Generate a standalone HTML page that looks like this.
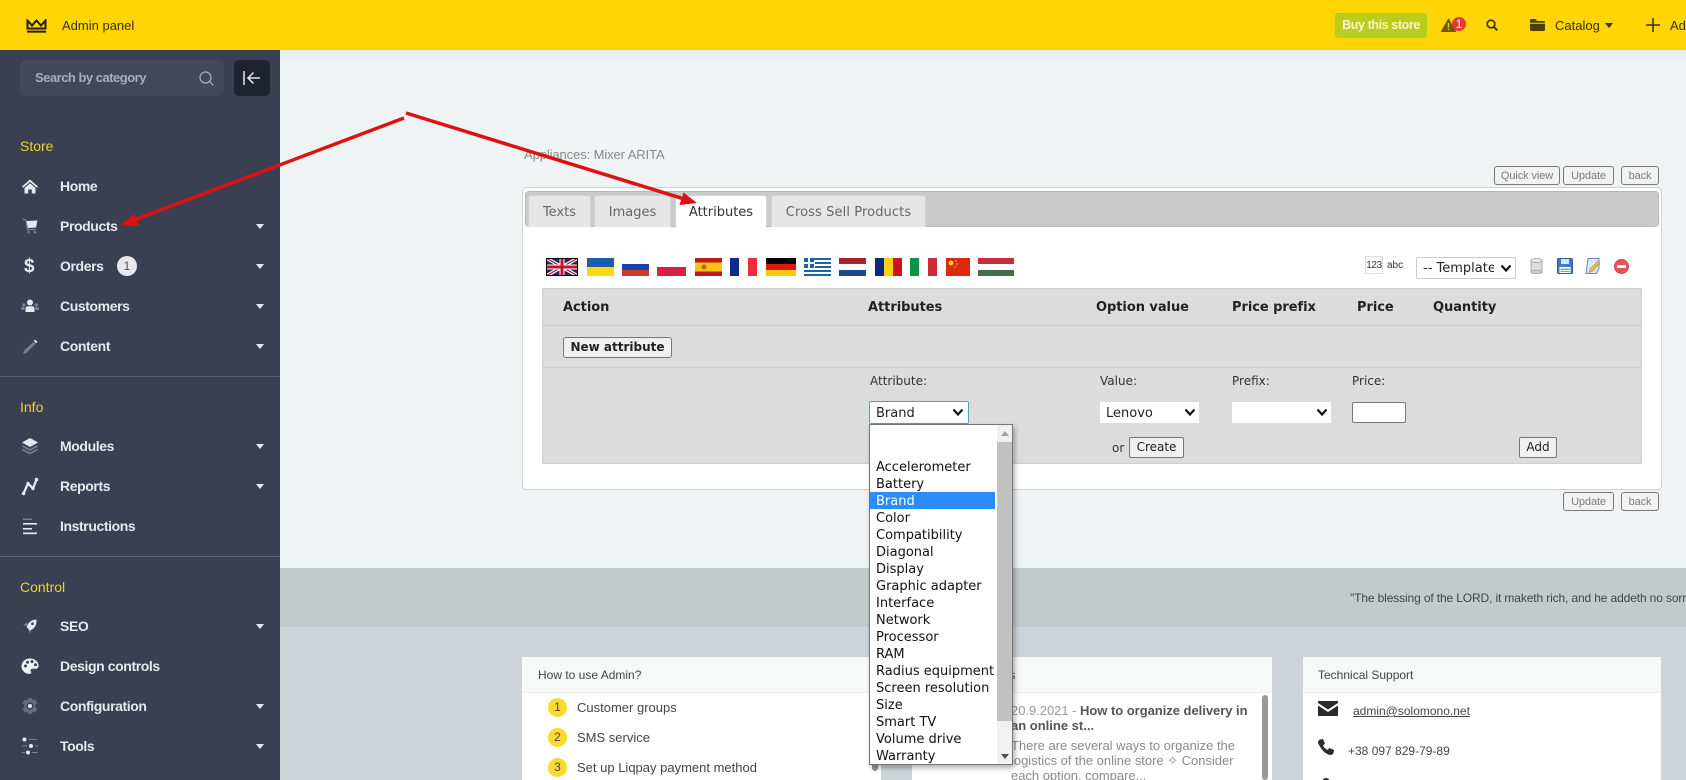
<!DOCTYPE html>
<html><head><meta charset="utf-8"><title>Admin panel</title>
<style>
html,body{margin:0;padding:0;width:1686px;height:780px;overflow:hidden;background:#eff3f4;font-family:"Liberation Sans",sans-serif;position:relative}
div,span,a,svg{position:absolute;box-sizing:border-box}
.t{white-space:nowrap;line-height:20px;height:20px}
.dj{font-family:"DejaVu Sans",sans-serif}
.m{left:60px;font-size:14px;font-weight:bold;color:#e6e8ef;letter-spacing:-.4px}
.s{left:20px;font-size:14px;color:#ecd22e}
.c{left:256px;width:0;height:0;border-left:4.5px solid transparent;border-right:4.5px solid transparent;border-top:5px solid #e6e8ef}
.r{left:0;width:280px;height:1px;background:#5b6072}
.i{left:20px;width:20px;height:20px;overflow:visible}
.tab{top:195px;height:32px;background:#e6e6e6;border:1px solid #d3d3d3;border-bottom:0;border-radius:3px 3px 0 0;color:#666;font:13px/34px "DejaVu Sans",sans-serif;text-align:center}
.b{background:#f2f2f2;border:1px solid #777;border-radius:3px;color:#7c7c7c;font-size:11px;line-height:18px;text-align:center;letter-spacing:-.1px}
.h{top:298px;font:bold 13px/20px "DejaVu Sans",sans-serif;color:#222;white-space:nowrap;letter-spacing:-.05px}
.l{top:371px;font:12px/20px "DejaVu Sans",sans-serif;color:#333;white-space:nowrap}
.sel{top:402px;height:21px;background:#fff;font:13px/23px "DejaVu Sans",sans-serif;color:#222;padding-left:6px}
.o{left:0;width:125px;height:17px;padding-left:6px;font:13px/19px "DejaVu Sans",sans-serif;color:#111;white-space:nowrap}
.card{top:657px;height:130px;background:#fff}
.ch{left:0;top:0;width:100%;height:36px;background:#f7f8f8;border-bottom:1px solid #eceeef}
.ct{top:665px;font-size:12px;color:#444}
.n{width:19px;height:19px;border-radius:50%;background:#fbd92f;color:#444;font-size:12px;line-height:19px;text-align:center;left:548px}
.li{left:577px;font-size:13px;color:#444}
.g{font-size:13px;color:#8a8a8a;left:1011px;letter-spacing:-.02px}
</style></head><body>

<!-- main backgrounds -->
<div style="left:280px;top:50px;width:1406px;height:14px;background:linear-gradient(#e8ecee,#eff3f4)"></div>
<div style="left:280px;top:568px;width:1406px;height:59px;background:#c2cacc"></div>
<div style="left:280px;top:627px;width:1406px;height:153px;background:#cdd3d7"></div>

<!-- header -->
<div style="left:0;top:0;width:1686px;height:50px;background:#ffd506"></div>
<svg style="left:26px;top:19px" width="21" height="14" viewBox="0 0 21 14"><path d="M1.5 1.5L6 6.5L10.5 1.5L15 6.5L19.5 1.5V9.5H1.5Z" fill="none" stroke="#221c00" stroke-width="2" stroke-linejoin="miter"/><path d="M1 12.6H20" stroke="#221c00" stroke-width="2"/></svg>
<div class="t" style="left:62px;top:16px;font-size:13px;color:#3b3000">Admin panel</div>
<div class="t" style="left:1335px;top:13px;width:92px;height:25px;background:#b8cd1e;border-radius:3px;color:#f9f6c4;font-size:12.5px;font-weight:bold;line-height:25px;text-align:center;letter-spacing:-.4px">Buy this store</div>
<svg style="left:1441px;top:18px" width="15" height="14" viewBox="0 0 15 14"><path d="M7.5 1L14.5 13.5H.5Z" fill="#6b5a00" stroke="#6b5a00" stroke-linejoin="round"/><path d="M7.5 5V9.5M7.5 10.7V12" stroke="#ffd506" stroke-width="1.4"/></svg>
<div style="left:1452px;top:17px;width:14px;height:14px;border-radius:50%;background:#e53935;color:#fff;font-size:12px;line-height:14px;text-align:center">1</div>
<svg style="left:1486px;top:19px" width="12" height="12" viewBox="0 0 12 12"><circle cx="5" cy="5" r="3.8" fill="none" stroke="#3d3300" stroke-width="1.7"/><path d="M8 8L11.3 11.3" stroke="#3d3300" stroke-width="2"/></svg>
<svg style="left:1530px;top:19px" width="15" height="12" viewBox="0 0 15 12"><path d="M0 1.5Q0 0 1.5 0H5.5L7 2H13.5Q15 2 15 3.3V3.7H0ZM0 4.7H15V10.5Q15 12 13.5 12H1.5Q0 12 0 10.5Z" fill="#4d4200"/></svg>
<div class="t" style="left:1555px;top:16px;font-size:13px;color:#3b3000">Catalog</div>
<div style="left:1605px;top:23px;width:0;height:0;border-left:4px solid transparent;border-right:4px solid transparent;border-top:5px solid #3b3000"></div>
<svg style="left:1646px;top:18px" width="14" height="14" viewBox="0 0 14 14"><path d="M7 0V14M0 7H14" stroke="#3b3000" stroke-width="1.5"/></svg>
<div class="t" style="left:1670px;top:16px;font-size:13px;color:#3b3000">Add</div>

<!-- sidebar -->
<div style="left:0;top:50px;width:280px;height:730px;background:#3a3f51"></div>
<div style="left:20px;top:60px;width:204px;height:36px;background:#434859;border-radius:5px"></div>
<div class="t" style="left:35px;top:68px;font-size:13px;font-weight:bold;color:#a9adb9;letter-spacing:-.5px">Search by category</div>
<svg style="left:199px;top:71px" width="15" height="15" viewBox="0 0 15 15"><circle cx="6.5" cy="6.5" r="5.5" fill="none" stroke="#aeb2bd" stroke-width="1.2"/><path d="M10.5 10.5L14.5 14.5" stroke="#aeb2bd" stroke-width="1.2"/></svg>
<div style="left:234px;top:60px;width:36px;height:36px;background:#1e2231;border-radius:5px"></div>
<svg style="left:243px;top:71px" width="18" height="14" viewBox="0 0 18 14"><path d="M1 0V14M17 7H5M10.5 1.5L5 7L10.5 12.5" fill="none" stroke="#e4e6ee" stroke-width="1.5"/></svg>

<div class="t s" style="top:136px">Store</div>
<svg class="i" style="top:176px" viewBox="0 0 20 20"><path d="M10 3.500L2 10.500L3.200 11.800L10 5.900L16.800 11.800L18 10.500Z" fill="#e6e8ef"/><path d="M4.500 12L10 7.200L15.500 12V17.500H11.800V13.500H8.200V17.500H4.500Z" fill="#e6e8ef"/></svg>
<div class="t m" style="top:176px">Home</div>
<svg class="i" style="top:216px" viewBox="0 0 20 20"><path d="M3 3L6 4.5L7.5 13.5H16" fill="none" stroke="#7a7f8c" stroke-width="1.3"/><path d="M6.5 5L17.5 4.5L16 11.5L8 12Z" fill="#e6e8ef"/><circle cx="8.5" cy="16" r="1.3" fill="#7a7f8c"/><circle cx="15" cy="16" r="1.3" fill="#7a7f8c"/></svg>
<div class="t m" style="top:216px">Products</div><div class="c" style="top:224px"></div>
<div class="t" style="left:24px;top:257px;font-size:19px;font-weight:bold;color:#e6e8ef">$</div>
<div class="t m" style="top:256px">Orders</div>
<div class="t" style="left:117px;top:256px;width:20px;height:20px;border-radius:10px;background:#e8e9ee;color:#555;font-size:12px;line-height:20px;text-align:center">1</div>
<div class="c" style="top:264px"></div>
<svg class="i" style="top:296px" viewBox="0 0 20 20"><circle cx="10" cy="6.5" r="3" fill="#e6e8ef"/><path d="M5.5 16V13Q5.5 10.3 8 10.3H12Q14.5 10.3 14.5 13V16Z" fill="#e6e8ef"/><circle cx="3.8" cy="9" r="1.7" fill="#7a7f8c"/><circle cx="16.2" cy="9" r="1.7" fill="#7a7f8c"/><path d="M1 14V12.5Q1 11 3 11H4.6V14ZM19 14V12.5Q19 11 17 11H15.4V14Z" fill="#7a7f8c"/></svg>
<div class="t m" style="top:296px">Customers</div><div class="c" style="top:304px"></div>
<svg class="i" style="top:336px" viewBox="0 0 20 20"><path d="M14 5.5L16 7.5L6.5 17L3 18L4 14.5Z" fill="#7a7f8c"/><path d="M15 3.5L17.5 6L16.3 7.2L13.8 4.7Z" fill="#e6e8ef"/></svg>
<div class="t m" style="top:336px">Content</div><div class="c" style="top:344px"></div>
<div class="r" style="top:376px"></div>

<div class="t s" style="top:397px">Info</div>
<svg class="i" style="top:436px" viewBox="0 0 20 20"><path d="M10 2L18 6.5L10 11L2 6.5Z" fill="#e6e8ef"/><path d="M2.5 10L10 14L17.5 10M2.5 13.5L10 17.5L17.5 13.5" fill="none" stroke="#7a7f8c" stroke-width="1.6"/></svg>
<div class="t m" style="top:436px">Modules</div><div class="c" style="top:444px"></div>
<svg class="i" style="top:476px" viewBox="0 0 20 20"><path d="M3.5 17.5L8 7.5L13 12.5L16.5 3.5" fill="none" stroke="#e6e8ef" stroke-width="2.300"/><circle cx="3.5" cy="17.5" r="1.8" fill="#e6e8ef"/><circle cx="8" cy="7.5" r="1.6" fill="#e6e8ef"/><circle cx="13" cy="12.5" r="1.6" fill="#e6e8ef"/><circle cx="16.5" cy="3.5" r="1.8" fill="#e6e8ef"/></svg>
<div class="t m" style="top:476px">Reports</div><div class="c" style="top:484px"></div>
<svg class="i" style="top:516px" viewBox="0 0 20 20"><rect x="3" y="2.5" width="9" height="1.5" fill="#7a7f8c"/><rect x="3" y="7" width="14" height="1.6" fill="#e6e8ef"/><rect x="3" y="12" width="9" height="1.6" fill="#e6e8ef"/><rect x="3" y="16.5" width="14" height="1.7" fill="#e6e8ef"/></svg>
<div class="t m" style="top:516px">Instructions</div>
<div class="r" style="top:556px"></div>

<div class="t s" style="top:577px">Control</div>
<svg class="i" style="top:616px" viewBox="0 0 20 20"><path d="M8 6L3 9L7 10ZM11 14L10 18L8 13Z" fill="#7a7f8c"/><path d="M16.5 3.5Q11 3.5 8 8L6.5 11L10 14.5L13 13Q17 9.5 16.5 3.5Z" fill="#e6e8ef"/><circle cx="12.5" cy="7.7" r="1.3" fill="#3a3f51"/></svg>
<div class="t m" style="top:616px">SEO</div><div class="c" style="top:624px"></div>
<svg class="i" style="top:656px" viewBox="0 0 20 20"><path d="M10 2.500C5 2.500 1.500 6 1.500 10.300C1.500 14.500 5 18 9.500 18C11.500 18 11.500 16.500 10.800 15.500C10 14 11 12.800 12.500 12.800H15.500C17.500 12.800 18.500 11.500 18.500 9.500C18.500 5.500 14.500 2.500 10 2.500Z" fill="#eef0f4"/><circle cx="5.500" cy="10" r="1.500" fill="#3a3f51"/><circle cx="7.500" cy="6.200" r="1.500" fill="#3a3f51"/><circle cx="12" cy="5.500" r="1.500" fill="#3a3f51"/><circle cx="15.500" cy="8.800" r="1.500" fill="#3a3f51"/></svg>
<div class="t m" style="top:656px">Design controls</div>
<svg class="i" style="top:696px" viewBox="0 0 20 20"><path d="M8 2H12L12.6 4.5L15 3.5L17.500 7L15.500 8.500V11.500L17.500 13L15 16.500L12.600 15.500L12 18H8L7.400 15.500L5 16.500L2.500 13L4.500 11.500V8.500L2.500 7L5 3.500L7.400 4.500Z" fill="#686d7c"/><circle cx="10" cy="10" r="3.600" fill="#3a3f51"/><circle cx="10" cy="10" r="2" fill="#e6e8ef"/></svg>
<div class="t m" style="top:696px">Configuration</div><div class="c" style="top:704px"></div>
<svg class="i" style="top:736px" viewBox="0 0 20 20"><circle cx="4.500" cy="3.500" r="2" fill="#e6e8ef"/><rect x="9" y="3" width="8" height="1" fill="#7a7f8c"/><rect x="2" y="9.500" width="5" height="1" fill="#7a7f8c"/><circle cx="11" cy="10" r="2" fill="#e6e8ef"/><rect x="15" y="9.500" width="3" height="1" fill="#7a7f8c"/><rect x="2" y="16" width="3" height="1" fill="#7a7f8c"/><circle cx="8" cy="16.500" r="2" fill="#e6e8ef"/><rect x="12" y="16" width="6" height="1" fill="#7a7f8c"/></svg>
<div class="t m" style="top:736px">Tools</div><div class="c" style="top:744px"></div>

<!-- page title and top buttons -->
<div class="t" style="left:524px;top:145px;font-size:13px;color:#888;letter-spacing:-.1px">Appliances: Mixer ARITA</div>
<div class="b" style="left:1494px;top:166px;width:66px;height:19px">Quick view</div>
<div class="b" style="left:1563px;top:166px;width:51px;height:19px">Update</div>
<div class="b" style="left:1621px;top:166px;width:38px;height:19px">back</div>

<!-- panel -->
<div style="left:522px;top:187px;height:303px;background:#fff;border:1px solid #cdd3d6;border-radius:4px;width:1140px"></div>
<div style="left:525px;top:191px;width:1134px;height:36px;background:#cacaca;border:1px solid #b5b5b5;border-radius:4px"></div>
<div class="tab" style="left:528px;width:63px">Texts</div>
<div class="tab" style="left:594px;width:77px">Images</div>
<div class="tab" style="left:675px;width:92px;background:#fff;color:#333;height:33px">Attributes</div>
<div class="tab" style="left:771px;width:155px;letter-spacing:.1px">Cross Sell Products</div>

<!-- flags -->
<svg style="left:546px;top:258px" width="32" height="18" viewBox="0 0 32 18"><rect width="32" height="18" fill="#26265f"/><path d="M0 0L32 18M32 0L0 18" stroke="#fff" stroke-width="3.500"/><path d="M0 0L32 18M32 0L0 18" stroke="#c8102e" stroke-width="1.200"/><path d="M16 0V18M0 9H32" stroke="#fff" stroke-width="5"/><path d="M16 0V18M0 9H32" stroke="#c8102e" stroke-width="3"/><rect x=".5" y=".5" width="31" height="17" fill="none" stroke="#000"/></svg>
<svg style="left:587px;top:258px" width="27" height="18"><rect width="27" height="9" fill="#1c5fa8"/><rect y="9" width="27" height="9" fill="#fcd80e"/></svg>
<svg style="left:622px;top:264px" width="27" height="12"><rect width="27" height="6" fill="#1c3fa8"/><rect y="6" width="27" height="6" fill="#cf3a26"/></svg>
<svg style="left:657px;top:267px" width="29" height="9"><rect width="29" height="9" fill="#d91f45"/></svg>
<svg style="left:695px;top:258px" width="27" height="18"><rect width="27" height="18" fill="#c2171c"/><rect y="4.500" width="27" height="9" fill="#f9c319"/><circle cx="9" cy="9" r="2.500" fill="#c2601c"/></svg>
<svg style="left:730px;top:258px" width="27" height="18"><rect width="9" height="18" fill="#0a2a8f"/><rect x="18" width="9" height="18" fill="#ee2e3c"/></svg>
<svg style="left:766px;top:258px" width="30" height="18"><rect width="30" height="6" fill="#000"/><rect y="6" width="30" height="6" fill="#dd1a12"/><rect y="12" width="30" height="6" fill="#fcc90d"/></svg>
<svg style="left:804px;top:258px" width="27" height="18"><rect width="27" height="18" fill="#fff"/><path d="M0 1H27M11 5H27M11 9H27M0 13H27M0 17H27" stroke="#1a64a6" stroke-width="2"/><rect width="10" height="10" fill="#1a64a6"/><path d="M5 0V10M0 5H10" stroke="#fff" stroke-width="2"/></svg>
<svg style="left:839px;top:258px" width="27" height="18"><rect width="27" height="6" fill="#a9212e"/><rect y="12" width="27" height="6" fill="#20478c"/></svg>
<svg style="left:875px;top:258px" width="27" height="18"><rect width="9" height="18" fill="#052a80"/><rect x="9" width="9" height="18" fill="#fcd20f"/><rect x="18" width="9" height="18" fill="#ce1224"/></svg>
<svg style="left:910px;top:258px" width="27" height="18"><rect width="9" height="18" fill="#0a9445"/><rect x="18" width="9" height="18" fill="#ce2b37"/></svg>
<svg style="left:946px;top:258px" width="24" height="18"><rect width="24" height="18" fill="#de2910"/><circle cx="5" cy="5" r="2.400" fill="#ffde00"/><circle cx="10" cy="3" r=".8" fill="#ffde00"/><circle cx="11" cy="6" r=".8" fill="#ffde00"/><circle cx="9" cy="9" r=".8" fill="#ffde00"/></svg>
<svg style="left:978px;top:258px" width="36" height="18"><rect width="36" height="6" fill="#cd2a3e"/><rect y="12" width="36" height="6" fill="#436f4d"/></svg>

<div class="t" style="left:1365px;top:256px;width:18px;height:18px;border:1px solid #ddd;font-size:10px;line-height:18px;text-align:center;color:#333;letter-spacing:-.4px">123</div>
<div class="t" style="left:1387px;top:256px;font-size:10px;color:#333">abc</div>
<div class="dj" style="left:1416px;top:257px;width:100px;height:22px;background:#fff;border:1px solid #ccc;border-radius:2px;font-size:13px;line-height:22px;padding-left:6px;color:#222;overflow:hidden;white-space:nowrap"><span style="position:static;display:inline-block;width:71px;overflow:hidden;vertical-align:top">-- Template</span></div>
<svg style="left:1500px;top:264px" width="12" height="9" viewBox="0 0 12 9"><path d="M1.500 1.500L6 6.500L10.500 1.500" fill="none" stroke="#111" stroke-width="2.200"/></svg>
<svg style="left:1530px;top:258px" width="13" height="16" viewBox="0 0 13 16"><rect x="1" y="2" width="11" height="12" fill="#ddd" stroke="#aaa"/><ellipse cx="6.500" cy="2.500" rx="5.500" ry="2" fill="#eee" stroke="#aaa"/><ellipse cx="6.500" cy="14" rx="5.500" ry="1.800" fill="#ccc" stroke="#aaa"/></svg>
<svg style="left:1557px;top:258px" width="16" height="16" viewBox="0 0 16 16"><rect x=".5" y=".5" width="15" height="15" rx="1" fill="#3f7cc0" stroke="#2c5f9e"/><rect x="4" y="1" width="8" height="5" fill="#d5e4f4"/><rect x="2.500" y="9" width="11" height="6" fill="#fff"/><rect x="3.500" y="10.500" width="9" height="1.500" fill="#6fbf73"/><rect x="3.500" y="12.800" width="9" height="1.200" fill="#6fbf73"/></svg>
<svg style="left:1585px;top:258px" width="17" height="16" viewBox="0 0 17 16"><path d="M3 .5H14V10L11.500 15.500H1Z" fill="#dbe8f7" stroke="#5b8fc9"/><path d="M5 11.500L13 3L15 5L7 13.500L4 14.500Z" fill="#edc53a" stroke="#a8862a" stroke-width=".6"/></svg>
<svg style="left:1614px;top:259px" width="15" height="15" viewBox="0 0 15 15"><circle cx="7.500" cy="7.500" r="7" fill="#e2575a" stroke="#d24649"/><rect x="3" y="6" width="9" height="3" fill="#fff"/></svg>

<!-- table -->
<div style="left:542px;top:288px;width:1100px;height:176px;background:#dcdcdc;border:1px solid #cfcfcf"></div>
<div style="left:543px;top:325px;width:1098px;height:1px;background:#cdcdcd"></div>
<div style="left:543px;top:367px;width:1098px;height:1px;background:#cdcdcd"></div>
<div class="h" style="left:563px">Action</div>
<div class="h" style="left:868px">Attributes</div>
<div class="h" style="left:1096px">Option value</div>
<div class="h" style="left:1232px">Price prefix</div>
<div class="h" style="left:1357px">Price</div>
<div class="h" style="left:1433px">Quantity</div>
<div class="dj" style="left:563px;top:337px;width:109px;height:21px;background:#f0f0f0;border:1px solid #777;border-radius:3px;font-size:12px;font-weight:bold;line-height:19px;text-align:center;color:#222">New attribute</div>
<div class="l" style="left:870px">Attribute:</div>
<div class="l" style="left:1100px">Value:</div>
<div class="l" style="left:1232px">Prefix:</div>
<div class="l" style="left:1352px">Price:</div>
<div class="sel" style="left:869px;top:401px;width:100px;height:23px;border:1px solid #4fa3b5;border-radius:2px;line-height:23px;padding-left:6px">Brand</div>
<svg style="left:952px;top:408px" width="12" height="9" viewBox="0 0 12 9"><path d="M1.500 1.500L6 6.500L10.500 1.500" fill="none" stroke="#111" stroke-width="2.200"/></svg>
<div class="sel" style="left:1100px;width:99px">Lenovo</div>
<svg style="left:1184px;top:408px" width="12" height="9" viewBox="0 0 12 9"><path d="M1.500 1.500L6 6.500L10.500 1.500" fill="none" stroke="#111" stroke-width="2.200"/></svg>
<div class="sel" style="left:1232px;width:99px"></div>
<svg style="left:1316px;top:408px" width="12" height="9" viewBox="0 0 12 9"><path d="M1.500 1.500L6 6.500L10.500 1.500" fill="none" stroke="#111" stroke-width="2.200"/></svg>
<div style="left:1352px;top:402px;width:54px;height:21px;background:#fff;border:1px solid #777;border-radius:2px"></div>
<div class="t dj" style="left:1112px;top:438px;font-size:12px;color:#333">or</div>
<div class="dj" style="left:1129px;top:437px;width:55px;height:21px;background:#f0f0f0;border:1px solid #777;border-radius:2px;font-size:12px;line-height:19px;text-align:center;color:#222">Create</div>
<div class="dj" style="left:1519px;top:437px;width:38px;height:21px;background:#f0f0f0;border:1px solid #777;border-radius:2px;font-size:12px;line-height:19px;text-align:center;color:#222">Add</div>
<div class="b" style="left:1563px;top:492px;width:51px;height:19px">Update</div>
<div class="b" style="left:1621px;top:492px;width:38px;height:19px">back</div>

<!-- quote -->
<div class="t" style="left:1350px;top:588px;font-size:12px;color:#444;letter-spacing:-.13px">"The blessing of the LORD, it maketh rich, and he addeth no sorrow with it"</div>

<!-- cards -->
<div class="card" style="left:522px;width:359px"><div class="ch"></div></div>
<div class="t ct" style="left:538px">How to use Admin?</div>
<div class="n" style="top:698px">1</div><div class="t li" style="top:698px">Customer groups</div>
<div class="n" style="top:728px">2</div><div class="t li" style="top:728px">SMS service</div>
<div class="n" style="top:758px">3</div><div class="t li" style="top:758px">Set up Liqpay payment method</div>
<div style="left:872px;top:700px;width:6px;height:71px;background:#999;border-radius:3px"></div>

<div class="card" style="left:912px;width:360px"><div class="ch"></div></div>
<div class="t ct" style="left:932px">Our latest news</div>
<div class="t" style="left:1011px;top:701px;font-size:13px;color:#999;letter-spacing:-.03px">20.9.2021 - <b style="color:#555">How to organize delivery in</b></div>
<div class="t" style="left:1011px;top:716px;font-size:13px;font-weight:bold;color:#555">an online st...</div>
<div class="t g" style="top:736px">There are several ways to organize the</div>
<div class="t g" style="top:751px">logistics of the online store ✧ Consider</div>
<div class="t g" style="top:766px">each option, compare...</div>
<div style="left:1262px;top:695px;width:6px;height:85px;background:#999;border-radius:3px"></div>

<div class="card" style="left:1303px;width:358px"><div class="ch"></div></div>
<div class="t ct" style="left:1318px">Technical Support</div>
<svg style="left:1318px;top:701px" width="20" height="15" viewBox="0 0 20 15"><path d="M0 0H20V2L10 8.500L0 2ZM0 4.500L10 11L20 4.500V15H0Z" fill="#2b2b2b"/></svg>
<div class="t" style="left:1353px;top:701px;font-size:12px;color:#444;text-decoration:underline">admin@solomono.net</div>
<svg style="left:1318px;top:739px" width="16" height="16" viewBox="0 0 16 16"><path d="M2 .5L5 0L7 4.500L5 6.500Q6.500 9.500 9.500 11L11.500 9L16 11L15.500 14Q14.500 16 12 16Q5 14.500 0 4Q0 1.500 2 .5Z" fill="#2b2b2b"/></svg>
<div class="t" style="left:1348px;top:741px;font-size:12px;color:#444">+38 097 829-79-89</div>
<div style="left:1322px;top:778px;width:8px;height:8px;border:2px solid #333;border-radius:50%"></div>

<!-- dropdown -->
<div style="left:869px;top:424px;width:144px;height:341px;background:#fff;border:1px solid #767676;box-shadow:2px 3px 5px rgba(0,0,0,.3);overflow:hidden">
<div style="left:127px;top:0;width:15px;height:339px;background:#f1f1f1"></div>
<div style="left:127px;top:17px;width:15px;height:279px;background:#c1c1c1"></div>
<div style="left:131px;top:6px;width:0;height:0;border-left:4px solid transparent;border-right:4px solid transparent;border-bottom:5px solid #a3a3a3"></div>
<div style="left:131px;top:329px;width:0;height:0;border-left:4px solid transparent;border-right:4px solid transparent;border-top:5px solid #505050"></div>
<div class="o" style="top:33px">Accelerometer</div>
<div class="o" style="top:50px">Battery</div>
<div class="o" style="top:67px;background:#2a8cff;color:#fff">Brand</div>
<div class="o" style="top:84px">Color</div>
<div class="o" style="top:101px">Compatibility</div>
<div class="o" style="top:118px">Diagonal</div>
<div class="o" style="top:135px">Display</div>
<div class="o" style="top:152px">Graphic adapter</div>
<div class="o" style="top:169px">Interface</div>
<div class="o" style="top:186px">Network</div>
<div class="o" style="top:203px">Processor</div>
<div class="o" style="top:220px">RAM</div>
<div class="o" style="top:237px">Radius equipment</div>
<div class="o" style="top:254px">Screen resolution</div>
<div class="o" style="top:271px">Size</div>
<div class="o" style="top:288px">Smart TV</div>
<div class="o" style="top:305px">Volume drive</div>
<div class="o" style="top:322px">Warranty</div>
</div>

<!-- annotation arrows -->
<svg style="left:0;top:0" width="1686" height="780" viewBox="0 0 1686 780">
<path d="M404 118L132 220.800" stroke="#dc1212" stroke-width="3.500"/>
<path d="M121 225L139 226L134.500 214Z" fill="#e01010"/>
<path d="M406 113L686 199.600" stroke="#dc1212" stroke-width="3.500"/>
<path d="M697 203L679.500 205L683.500 192.500Z" fill="#e01010"/>
</svg>
</body></html>
